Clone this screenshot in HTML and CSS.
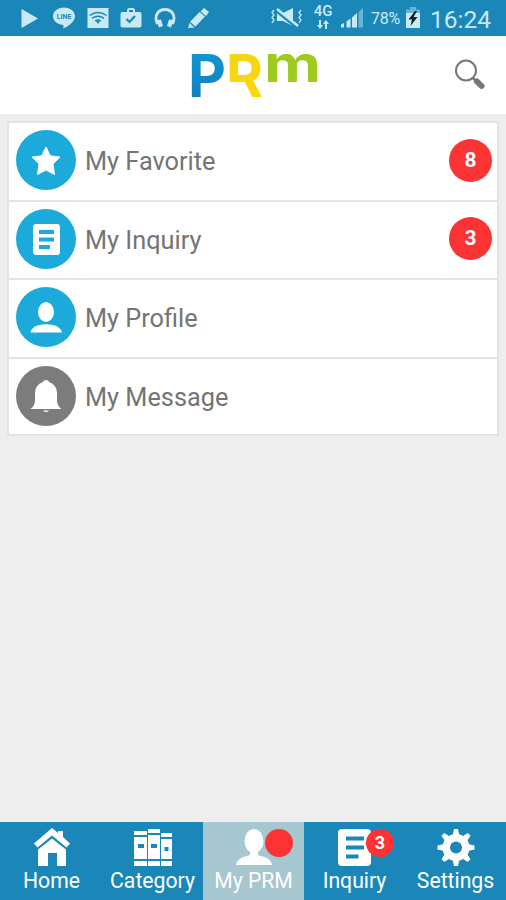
FILE: index.html
```
<!DOCTYPE html>
<html lang="en">
<head>
    <meta charset="UTF-8">
    <title>My PRM</title>
    <link rel="stylesheet" href="styles.css">
</head>
<body>
    <!-- Phone status bar -->
    <div class="status-bar">
        <div class="status-left">
            <svg width="22" height="22" viewBox="0 0 22 22"><path d="M1.5 2v19L18 11.5z"/></svg>
            <svg width="22" height="22" viewBox="0 0 22 22">
                <path d="M11 .5C5 .5 0 4.200 0 9.300c0 4.400 4 8 9.500 8.500 1.200.200 1 1.300.800 3.700 3-1.200 11.700-6 11.700-12.200C22 4.200 17 .5 11 .5z"/>
                <text class="line-text" x="11" y="11.800" text-anchor="middle">LINE</text>
            </svg>
            <svg width="22" height="22" viewBox="0 0 22 22">
                <path d="M.5 1h21v20H.5z"/>
                <g class="cut-line"><path d="M2.500 8.500q8.500-6 17 0M5 11.300q6-4 12 0M8 14q3-2 6 0"/></g>
                <path class="cut" d="M8.500 13.500h5L11 17z"/>
            </svg>
            <svg width="22" height="22" viewBox="0 0 22 22">
                <path d="M2.500 5H7V3.500Q7 1 9.500 1h3Q15 1 15 3.500V5h4.500q2 0 2 2v11.500q0 2-2 2h-17q-2 0-2-2V7q0-2 2-2z"/>
                <path class="cut" d="M9 3h4v2H9z"/>
                <path class="cut-line thick" d="M6.500 12l3 3 5.500-6"/>
            </svg>
            <svg width="22" height="22" viewBox="0 0 22 22">
                <path class="line" d="M3.500 17C-.5 9 4 2.500 11 2.500S22.500 9 18.500 17"/>
                <path d="M2.500 13l4.500-.5 2 6.500-4 1.500zM19.500 13l-4.500-.5-2 6.500 4 1.500z"/>
            </svg>
            <svg width="22" height="22" viewBox="0 0 22 22"><path d="M17 1l5 4-3 4-5.500-4.500zM12.500 5L18 9.500l-9.500 10-5.500-4.500zM2.500 16l5 4.500-6.500.500z"/></svg>
        </div>
        <div class="status-right">
            <svg class="mute" width="34" height="22" viewBox="0 0 34 22">
                <path d="M7 6h6l10-5v18l-10-5H7z"/>
                <path class="slash" d="M6 3l21 17"/>
                <path class="slash-line" d="M7 2l21 17"/>
                <path class="wave" d="M4 3L2 5.500 4 8l-2 2.500L4 13l-2 3M31 3l-2 2.500L31 8l-2 2.500 2 2.500-2 3"/>
            </svg>
            <div class="network">
                <span>4G</span>
                <svg width="14" height="9" viewBox="0 0 14 9"><path d="M3 0h2v5h2L4 9 1 5h2zM9 9h2V4h2l-3-4-3 4h2z"/></svg>
            </div>
            <svg class="signal" width="23" height="21" viewBox="0 0 23 21">
                <path d="M0 17.500L3 16v4.500H0zM5.500 14.500l4-3v9h-4zM11 10.500L16 6v14.500h-5z"/>
                <path class="dim" d="M17.500 5L22 1v19.500h-4.500z"/>
            </svg>
            <span class="percent">78%</span>
            <svg class="battery" width="14" height="22" viewBox="0 0 14 22">
                <path class="dim" d="M4 0h6v2.500h4V6H0V2.500h4z"/>
                <path d="M0 6h14v15H0z"/>
                <path class="bolt" d="M9 4L2.500 12.500H6L4.500 19l7-9H7.500L11 4z"/>
            </svg>
            <span class="time">16:24</span>
        </div>
    </div>

    <header>
        <svg class="logo" width="130" height="50" viewBox="0 0 130 50">
            <defs>
                <linearGradient id="blue" x1="0" y1="0" x2="0" y2="1">
                    <stop offset="0" stop-color="#109bd9"/>
                    <stop offset="1" stop-color="#1478b6"/>
                </linearGradient>
                <linearGradient id="yellow" x1="0" y1="0" x2="0" y2="1">
                    <stop offset="0" stop-color="#f0d51b"/>
                    <stop offset="1" stop-color="#ffd800"/>
                </linearGradient>
            </defs>
            <text x="-3" y="47" font-size="59" fill="url(#blue)" textLength="38" lengthAdjust="spacingAndGlyphs">P</text>
            <text x="35" y="47" font-size="59" fill="url(#yellow)" textLength="37" lengthAdjust="spacingAndGlyphs">R</text>
            <rect x="36" y="32" width="14" height="17" fill="#fff"/>
            <text x="73" y="32" font-size="51" fill="#9fca20" textLength="57" lengthAdjust="spacingAndGlyphs">m</text>
        </svg>
        <button class="search" aria-label="Search">
            <svg width="34" height="34" viewBox="0 0 34 34">
                <circle cx="13" cy="12.500" r="10" fill="none" stroke="#777" stroke-width="2"/>
                <path d="M19.500 19.500l3 3" stroke="#777" stroke-width="2.500"/>
                <path d="M24 23.500l4.500 4.500" stroke="#777" stroke-width="6" stroke-linecap="round"/>
            </svg>
        </button>
    </header>

    <main>
        <ul class="menu">
            <li>
                <span class="circle"><svg width="60" height="60" viewBox="0 0 60 60"><path d="M30 17l4.200 8.800 9.800 1.300-7 6.800 1.500 10.600L30 40l-8.500 4.500L23 33.900l-7-6.800 9.800-1.300z" stroke="#fff" stroke-linejoin="round"/></svg></span>
                <span class="label">My Favorite</span>
                <span class="badge">8</span>
            </li>
            <li>
                <span class="circle"><svg width="60" height="60" viewBox="0 0 60 60"><rect x="17" y="15" width="27" height="31" rx="3"/><path class="lines" d="M23 21h15v4H23zM23 28.500h15v4H23zM23 36h11v4H23z"/></svg></span>
                <span class="label">My Inquiry</span>
                <span class="badge">3</span>
            </li>
            <li>
                <span class="circle"><svg width="60" height="60" viewBox="0 0 60 60"><ellipse cx="30" cy="25" rx="8" ry="10"/><path d="M14.500 45.500q1-6 9-7.500 6.500-1.500 13.500 0 7.500 1.500 9 7.500z"/></svg></span>
                <span class="label">My Profile</span>
            </li>
            <li>
                <span class="circle grey"><svg width="60" height="60" viewBox="0 0 60 60"><path d="M14.500 43q4.500-3 4.500-9v-7q0-8 8-11 .5-2 3-2t3 2q8 3 8 11v7q0 6 4.500 9z"/><path d="M27 44.500h6q-3 3-6 0z"/></svg></span>
                <span class="label">My Message</span>
            </li>
        </ul>
    </main>

    <!-- Bottom tabs -->
    <nav>
        <a class="tab">
            <svg width="38" height="40" viewBox="0 0 38 40"><path d="M19 0l6 5V3h5v6l7 6.500-3.500 4L19 7.500 4.500 19.500 1 15.500zM19 10.500l14 11V38h-9V25h-9v13H5V21.500z"/></svg>
            <span>Home</span>
        </a>
        <a class="tab">
            <svg width="38" height="40" viewBox="0 0 38 40">
                <path d="M0 3h13v4H0zM14 1h12v4H14zM27 5h11v4H27zM0 9h13v22H0zM14 7h12v24H14zM27 11h11v20H27zM0 33h13v5H0zM14 33h12v5H14zM27 33h11v5H27z"/>
                <path class="lines" d="M4 16h6v4H4zM17 16h6v4h-6zM30.500 19h4v4h-4z"/>
            </svg>
            <span>Category</span>
        </a>
        <a class="tab active">
            <svg width="38" height="40" viewBox="0 0 38 40"><ellipse cx="19" cy="13" rx="9.500" ry="12"/><path d="M1 37q1-7 11-9l3-1v-4h8v4l3 1q10 2 11 9z"/></svg>
            <span>My PRM</span>
            <b class="tab-badge"></b>
        </a>
        <a class="tab">
            <svg width="38" height="40" viewBox="0 0 38 40"><rect x="2" y="1" width="33" height="37" rx="4"/><path class="lines" d="M10 8.500h18v4H10zM10 17.500h18v4H10zM10 26.500h12.500v4H10z"/></svg>
            <span>Inquiry</span>
            <b class="tab-badge">3</b>
        </a>
        <a class="tab">
            <svg width="38" height="40" viewBox="0 0 38 40">
                <path d="M15.500 8L17 1h4l1.500 7v23L21 38h-4l-1.500-7z"/>
                <path d="M15.500 8L17 1h4l1.500 7v23L21 38h-4l-1.500-7z" transform="rotate(45 19 19.500)"/>
                <path d="M15.500 8L17 1h4l1.500 7v23L21 38h-4l-1.500-7z" transform="rotate(90 19 19.500)"/>
                <path d="M15.500 8L17 1h4l1.500 7v23L21 38h-4l-1.500-7z" transform="rotate(135 19 19.500)"/>
                <circle cx="19" cy="19.500" r="13.500"/>
                <circle class="lines" cx="19" cy="19.500" r="6"/>
            </svg>
            <span>Settings</span>
        </a>
    </nav>
</body>
</html>
```
FILE: styles.css
```
* {
    box-sizing: border-box;
}

body {
    margin: 0;
    height: 900px;
    display: flex;
    flex-direction: column;
    background-color: #eeeeee;
    font-family: Roboto, "Liberation Sans", sans-serif;
    overflow: hidden;
}

svg {
    display: block;
    flex-shrink: 0;
}

/* status bar */
.status-bar {
    height: 36px;
    display: flex;
    justify-content: space-between;
    align-items: flex-start;
    padding: 7px 15px 0 19.5px;
    background-color: #1b87b9;
    color: #c9eaf5;
    fill: #c9eaf5;
}

.status-left {
    display: flex;
    gap: 11.5px;
}

.status-right {
    display: flex;
}

.line-text {
    font-size: 7px;
    font-weight: bold;
    fill: #1b87b9;
}

.cut {
    fill: #1b87b9;
}

.cut-line {
    fill: none;
    stroke: #1b87b9;
    stroke-width: 1.4;
}

.thick {
    stroke-width: 2.2;
}

.line {
    fill: none;
    stroke: #c9eaf5;
    stroke-width: 2.8;
}

.slash {
    stroke: #1b87b9;
    stroke-width: 4;
}

.slash-line {
    stroke: #c9eaf5;
    stroke-width: 2.4;
}

.wave {
    fill: none;
    stroke: #c9eaf5;
    stroke-width: 1.3;
}

.dim {
    opacity: 0.45;
}

.bolt {
    fill: #10222c;
}

.mute {
    margin-right: 9px;
}

.network {
    width: 20px;
    margin: -3px 8px 0 0;
    display: flex;
    flex-direction: column;
    align-items: center;
    font-size: 15px;
    font-weight: 500;
    line-height: 15px;
}

.network svg {
    margin-top: 1px;
}

.signal {
    margin-right: 7px;
}

.percent {
    width: 32px;
    margin-right: 3px;
    font-size: 16px;
    line-height: 24px;
    letter-spacing: -0.2px;
}

.battery {
    margin-right: 10px;
}

.time {
    width: 61px;
    font-size: 24.5px;
    line-height: 25px;
    white-space: nowrap;
}

/* header */
header {
    height: 78px;
    position: relative;
    display: flex;
    justify-content: center;
    padding: 14px 0 0 5px;
    background-color: #ffffff;
}

.logo {
    font-family: Inter, sans-serif;
    font-weight: 700;
    overflow: visible;
}

.search {
    position: absolute;
    top: 22px;
    right: 19px;
    padding: 0;
    border: none;
    background: none;
}

/* list */
main {
    flex: 1;
    padding: 7px 7px;
}

.menu {
    margin: 0;
    padding: 0;
    list-style: none;
    border: 2px solid #e4e4e4;
    background-color: #ffffff;
}

.menu li {
    height: 78.5px;
    display: flex;
    align-items: center;
    padding: 0 5px 2px 7px;
    border-bottom: 2px solid #e4e4e4;
}

.menu li:last-child {
    height: 75px;
    border-bottom: none;
    padding-bottom: 0;
}

.circle {
    width: 60px;
    height: 60px;
    border-radius: 50%;
    background-color: #1baada;
    fill: #ffffff;
}

.circle.grey {
    background-color: #7c7c7c;
}

.circle .lines {
    fill: #1baada;
}

.label {
    flex: 1;
    margin-left: 9px;
    padding-top: 3px;
    font-size: 25.3px;
    color: #747474;
}

.badge {
    width: 43px;
    height: 43px;
    border-radius: 50%;
    background-color: #fb3334;
    color: #ffffff;
    font-size: 21px;
    font-weight: 700;
    line-height: 43px;
    text-align: center;
}

/* tabs */
nav {
    height: 78px;
    display: flex;
    padding-left: 1px;
    background-color: #1b87b9;
}

.tab {
    flex: 1;
    position: relative;
    display: flex;
    flex-direction: column;
    align-items: center;
    padding-top: 6px;
    color: #ffffff;
    fill: #ffffff;
    font-size: 21.2px;
    line-height: 26px;
}

.tab.active {
    background-color: #a6c7cf;
}

.tab .lines {
    fill: #1b87b9;
}

.tab-badge {
    position: absolute;
    top: 7px;
    right: 11px;
    width: 28px;
    height: 28px;
    border-radius: 50%;
    background-color: #fb3334;
    font-size: 18px;
    line-height: 28px;
    text-align: center;
}
```
